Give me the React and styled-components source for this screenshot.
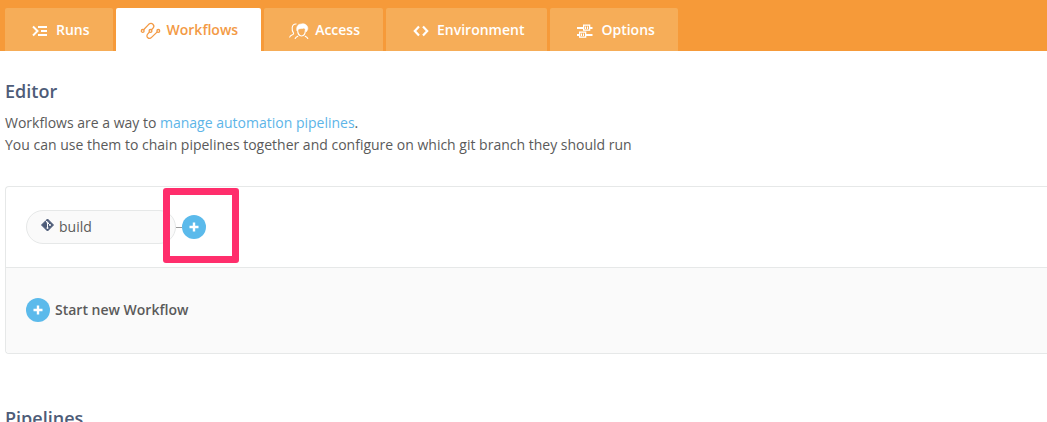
import React from "react";
import styled, { createGlobalStyle, css } from "styled-components";

const GlobalStyle = createGlobalStyle`
  *, *::before, *::after { box-sizing: border-box; }
  body {
    margin: 0;
    background: #fff;
    color: #5a5a5a;
    font-family: "Open Sans", "Noto Sans", sans-serif;
    font-size: 14px;
    line-height: 22px;
    overflow-x: hidden;
  }
  h2, p { margin: 0; }
`;

const TabBar = styled.nav`
  display: flex;
  gap: 3px;
  padding: 8px 5px 0;
  background: #f69a39;
`;

const Tab = styled.button`
  display: flex;
  align-items: center;
  gap: 5px;
  height: 43px;
  padding: 0 23px 0 24px;
  border: 0;
  border-radius: 2px 2px 0 0;
  background: #f6ad58;
  color: #fff;
  font: inherit;
  font-weight: 600;
  white-space: nowrap;
  cursor: pointer;
  ${({ $active }) => $active && css`
    background: #fff;
    color: #f39a45;
  `}
`;

const TabIcon = styled.svg`
  flex: none;
  width: 22px;
  height: 20px;
  margin-top: 2px;
  fill: none;
  stroke: currentColor;
  stroke-width: 2;
`;

const Content = styled.main`
  padding: 28px 0 0 5px;
`;

const Heading = styled.h2`
  color: #4e5c78;
  font-size: 18px;
  font-weight: 600;
  line-height: 24px;
`;

const Intro = styled.p`
  margin-top: 9px;
`;

const TextLink = styled.a`
  color: #5db5e8;
  text-decoration: none;
`;

const Panel = styled.section`
  margin: 30px 0 52px;
  border: 1px solid #e6e8e8;
  border-right: 0;
  border-radius: 4px 0 0 4px;
`;

const WorkflowRow = styled.div`
  display: flex;
  align-items: center;
  height: 80px;
  padding: 0 20px;
`;

const Pipeline = styled.button`
  display: flex;
  align-items: center;
  gap: 4px;
  width: 150px;
  height: 34px;
  padding: 0 14px;
  border: 1px solid #e6e8e8;
  border-radius: 17px;
  background: #fafafa;
  color: inherit;
  font: inherit;
  cursor: pointer;
`;

const GitIcon = styled.svg`
  flex: none;
  width: 14px;
  height: 14px;
  margin-bottom: 4px;
`;

const Connector = styled.span`
  width: 6px;
  height: 1px;
  background: #999;
`;

const Highlighted = styled.div`
  position: relative;
  display: flex;
`;

const Highlight = styled.span`
  position: absolute;
  top: -27px;
  left: -19px;
  width: 76px;
  height: 75px;
  border: 7px solid #ff2e6c;
  border-radius: 3px;
  pointer-events: none;
`;

const RoundButton = styled.button`
  display: grid;
  place-items: center;
  width: 24px;
  height: 24px;
  padding: 0;
  border: 0;
  border-radius: 50%;
  background: #5bbaeb;
  cursor: pointer;
`;

const StartRow = styled.div`
  display: flex;
  align-items: center;
  gap: 5px;
  height: 86px;
  padding: 0 20px 2px;
  border-top: 1px solid #e6e8e8;
  border-radius: 0 0 0 4px;
  background: #fafafa;
`;

const StartLabel = styled.label`
  font-weight: 600;
  cursor: pointer;
`;

const icons = {
  runs: (
    <path d="M4 5.500l4.500 4.500L4 14.500M9 6h9M12 10h6M9 14h9" />
  ),
  workflows: (
    <g strokeWidth="1.3">
      <circle cx="2.700" cy="9.900" r="1.400" />
      <circle cx="10.500" cy="9.900" r="1.400" />
      <circle cx="18.300" cy="9.900" r="1.400" />
      <path d="M3.600 8.800L8.500 3.600c1.500-1.400 3.200-1.500 4.400-.4s1.300 2.600.1 4l-1.600 1.600M9.500 11l-1.700 1.900c-1.200 1.400-1.100 2.900 0 3.800s2.700.8 4-.6l5.500-5.200" />
    </g>
  ),
  access: (
    <g strokeWidth="1.100">
      <path d="M1.500 16.500c.3-1.700 1.500-2.300 3.300-3 .9-.4 1-1.200.5-1.900C4.200 10.200 4 8.500 4.200 6.500 4.500 4.300 6 2.800 8.500 3" />
      <path d="M7 18c.3-1.700 1.400-2.400 3.200-3.100M20 18c-.3-1.700-1.400-2.400-3.200-3.100" />
      <path d="M9.600 8.500c0 3.600 1.500 6.500 3.900 6.500s3.900-2.900 3.900-6.500" />
      <path fill="currentColor" strokeWidth=".6" d="M9 10c-1-3.600.6-7 4.300-7 3.300-.9 6.500 1.300 6.500 4.300 0 1.600-.8 2.700-1.800 3.700-.1-2-.8-3.200-2-4-1.700.9-3.700.3-5 .9-1 .4-1.500 1.100-2 2.100z" />
    </g>
  ),
  environment: (
    <path strokeWidth="2.200" d="M9 5.500L4.800 10 9 14.500M13 5.500l4.200 4.500-4.200 4.500" />
  ),
  options: (
    <>
      <path d="M3 7h6.500M16 7h2.500M3 14h2.500M12 14h6.500" />
      <g strokeWidth="1.300">
        <rect x="9.650" y="4.150" width="6" height="5" />
        <rect x="5.650" y="11.150" width="6" height="5" />
        <path strokeWidth="1" d="M11.500 5.500v2.500M13.500 5.500v2.500M7.500 12.500v2.500M9.500 12.500v2.500" />
      </g>
    </>
  ),
};

const tabs = [
  { id: "runs", label: "Runs" },
  { id: "workflows", label: "Workflows" },
  { id: "access", label: "Access" },
  { id: "environment", label: "Environment" },
  { id: "options", label: "Options" },
];

function AddButton(props) {
  return (
    <RoundButton type="button" {...props}>
      <svg width="10" height="10" viewBox="0 0 10 10" aria-hidden="true">
        <path d="M5 .5v9M.5 5h9" stroke="#fff" strokeWidth="2.4" />
      </svg>
    </RoundButton>
  );
}

export default function App() {
  const [active, setActive] = React.useState("workflows");

  return (
    <>
      <GlobalStyle />
      <TabBar>
        {tabs.map(({ id, label }) => (
          <Tab key={id} type="button" $active={id === active} onClick={() => setActive(id)}>
            <TabIcon viewBox="0 0 22 20" aria-hidden="true">{icons[id]}</TabIcon>
            {label}
          </Tab>
        ))}
      </TabBar>
      <Content>
        <Heading>Editor</Heading>
        <Intro>
          Workflows are a way to <TextLink href="#pipelines">manage automation pipelines</TextLink>.
          <br />
          You can use them to chain pipelines together and configure on which git branch they should run
        </Intro>
        <Panel>
          <WorkflowRow>
            <Pipeline type="button">
              <GitIcon viewBox="0 0 14 14" aria-hidden="true">
                <path d="M6.500 1l6 6-6 6-6-6z" fill="#4e5c78" stroke="#4e5c78" strokeLinejoin="round" />
                <path d="M4.500 2.500L9 7M6.500 4.500V10" stroke="#fafafa" fill="none" />
                <circle cx="6.500" cy="4.500" r="1" fill="#fafafa" />
                <circle cx="9" cy="7" r="1" fill="#fafafa" />
                <circle cx="6.500" cy="10" r="1" fill="#fafafa" />
              </GitIcon>
              build
            </Pipeline>
            <Connector />
            <Highlighted>
              <AddButton aria-label="Add pipeline" />
              <Highlight />
            </Highlighted>
          </WorkflowRow>
          <StartRow>
            <AddButton id="start-workflow" />
            <StartLabel htmlFor="start-workflow">Start new Workflow</StartLabel>
          </StartRow>
        </Panel>
        <Heading id="pipelines">Pipelines</Heading>
      </Content>
    </>
  );
}
